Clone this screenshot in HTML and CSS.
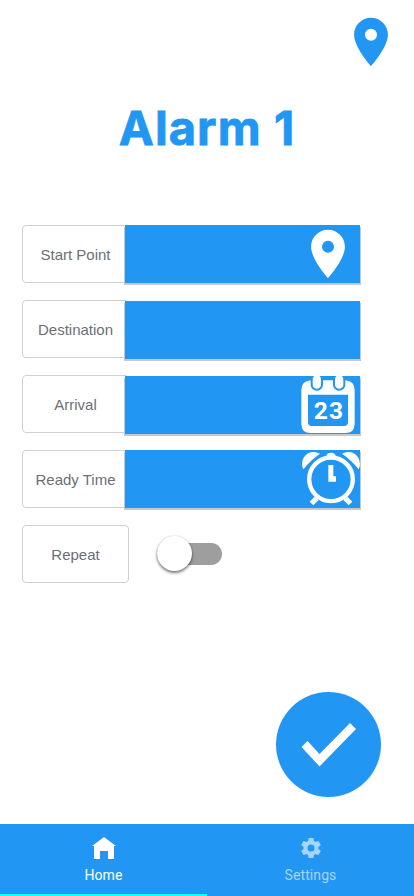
FILE: index.html
```html
<!DOCTYPE html>
<html lang="en">
<head>
<meta charset="utf-8">
<title>Alarm 1</title>
<link rel="stylesheet" href="styles.css">
</head>
<body>
<div class="app">
  <header class="top">
    <svg class="pin" viewBox="0 0 24 24"><path d="M12 2C8.13 2 5 5.13 5 9c0 5.25 7 13 7 13s7-7.75 7-13c0-3.87-3.13-7-7-7zm0 9.5a2.5 2.5 0 0 1 0-5 2.5 2.5 0 0 1 0 5z"/></svg>
  </header>
  <h1 class="title">Alarm 1</h1>
  <main class="form">
    <div class="row">
      <div class="label">Start Point</div>
      <div class="field"><svg class="pin" viewBox="0 0 24 24"><path d="M12 2C8.13 2 5 5.13 5 9c0 5.25 7 13 7 13s7-7.75 7-13c0-3.87-3.13-7-7-7zm0 9.5a2.5 2.5 0 0 1 0-5 2.5 2.5 0 0 1 0 5z"/></svg></div>
    </div>
    <div class="row">
      <div class="label">Destination</div>
      <div class="field low"></div>
    </div>
    <div class="row">
      <div class="label">Arrival</div>
      <div class="field low">
        <svg class="wide" viewBox="27 24 183 174">
          <path fill-rule="evenodd" d="M62 37H166Q194 39 194 67V167Q194 195 166 195H62Q34 195 34 167V67Q34 39 62 37ZM54 80V163Q54 174 65 174H163Q174 174 174 163V80Z"/>
          <g class="ring"><path d="M62 24V50a18.500 18.500 0 0 0 37 0V24ZM129 24V50a18.500 18.500 0 0 0 37 0V24Z"/></g>
          <path d="M73 24Q68 27 68 34V50a12.500 12.500 0 0 0 25 0V34Q93 27 88 24ZM140 24Q135 27 135 34V50a12.500 12.500 0 0 0 25 0V34Q160 27 155 24Z"/>
          <text x="71 117" y="154">23</text>
        </svg>
      </div>
    </div>
    <div class="row">
      <div class="label">Ready Time</div>
      <div class="field">
        <svg class="wide" viewBox="27 246 183 174">
          <path d="M40 304C26 276 52 238 90 257Q62 276 40 304ZM206 304C220 276 194 238 156 257Q184 276 206 304Z"/>
          <path d="M109 264Q110 254 123 254T137 264V270H109ZM75 385L86 396L70 412L59 401ZM171 385L160 396L176 412L187 401ZM115 291H130V325H138V341H115Z"/>
          <circle class="dial" cx="123" cy="334" r="65.500"/>
        </svg>
      </div>
    </div>
    <div class="row">
      <div class="label">Repeat</div>
      <div class="switch"><span class="thumb"></span></div>
    </div>
  </main>
  <button class="done" aria-label="Done"><svg viewBox="0 0 105 105"><path d="M25.500 55L31.500 49L43.500 62L74 31L80 37L43.500 74.500Z"/></svg></button>
  <nav class="tabs">
    <div class="tab active">
      <svg viewBox="0 0 24 24"><path d="M12 1L24 10H22V23H16V15H8V23H2V10H0Z"/></svg>
      <span>Home</span>
    </div>
    <div class="tab">
      <svg viewBox="0 0 24 24"><path d="M19.430 12.980c.04-.32.07-.64.07-.98s-.03-.66-.07-.98l2.110-1.650c.19-.15.24-.42.12-.64l-2-3.460c-.12-.22-.39-.3-.61-.22l-2.490 1c-.52-.4-1.080-.73-1.690-.98l-.38-2.650C14.460 2.180 14.250 2 14 2h-4c-.25 0-.46.18-.49.42l-.38 2.650c-.61.25-1.170.59-1.690.98l-2.490-1c-.23-.09-.49 0-.61.22l-2 3.460c-.13.22-.07.49.12.64l2.110 1.650c-.04.32-.07.65-.07.98s.03.66.07.98l-2.110 1.650c-.19.15-.24.42-.12.64l2 3.460c.12.22.39.3.61.22l2.490-1c.52.4 1.080.73 1.690.98l.38 2.650c.03.24.24.42.49.42h4c.25 0 .46-.18.49-.42l.38-2.650c.61-.25 1.170-.59 1.690-.98l2.490 1c.23.09.49 0 .61-.22l2-3.460c.12-.22.07-.49-.12-.64l-2.110-1.650zM12 15.500a3.500 3.500 0 0 1 0-7 3.500 3.500 0 0 1 0 7z"/></svg>
      <span>Settings</span>
    </div>
  </nav>
</div>
</body>
</html>
```
FILE: styles.css
```css
* { box-sizing: border-box; }
body { margin: 0; background: #fff; }
.app { height: 896px; width: 414px; display: flex; flex-direction: column; overflow: hidden; }
svg { display: block; flex: none; }
.top { height: 71px; padding: 13px 14px 0 0; display: flex; justify-content: flex-end; fill: #2196f3; }
.pin { width: 58px; height: 58px; }
.title { margin: 27px 0 0; height: 60px; line-height: 60px; text-align: center; color: #2196f3; font-family: Inter, sans-serif; font-weight: 700; font-size: 47px; letter-spacing: 1.100px; -webkit-text-stroke: .8px #2196f3; }
.form { margin: 67px 0 0 22px; display: flex; flex-direction: column; gap: 17px; }
.row { display: flex; height: 58px; }
.label { width: 107px; height: 58px; border: 1px solid #d0d0d0; border-radius: 4px; display: flex; align-items: center; justify-content: center; color: #6c6f75; font: 15px "Liberation Sans", Arial, sans-serif; padding-top: 1px; }
.field { position: relative; width: 235px; height: 58px; margin-left: -4px; background: #2196f3; box-shadow: 1px 2px 0 #c8c8c8, -1px 2px 0 #c8c8c8; display: flex; justify-content: flex-end; fill: #fff; }
.field .pin { margin-right: 3px; }
.low { margin-top: 1px; }
.wide { width: 61px; height: 58px; }
.ring { fill: #2196f3; }
.wide text { font: 700 74px Roboto, sans-serif; }
.dial { fill: none; stroke: #fff; stroke-width: 13px; }
.switch { width: 65px; height: 22px; margin: 18px 0 0 28px; border-radius: 11px; background: #9e9e9e; }
.thumb { display: block; width: 35px; height: 35px; margin-top: -7px; border-radius: 50%; background: #fff; box-shadow: 0 2px 3px rgba(0,0,0,.5), 0 0 2px rgba(0,0,0,.2); }
.done { width: 105px; height: 105px; margin: 109px 0 0 276px; padding: 0; border: 0; border-radius: 50%; background: #2196f3; fill: #fff; flex: none; }
.tabs { margin-top: auto; height: 72px; display: flex; background: #2196f3; }
.tab { flex: 1; display: flex; flex-direction: column; align-items: center; padding-top: 12px; color: #fff; fill: #fff; font: 14px/20px Roboto, sans-serif; letter-spacing: .1px; }
.tab svg { width: 24px; height: 24px; margin-bottom: 5px; }
.tab:not(.active) { color: #a6d5fa; fill: #a6d5fa; }
.active { border-bottom: 2px solid #18ffff; }
```
